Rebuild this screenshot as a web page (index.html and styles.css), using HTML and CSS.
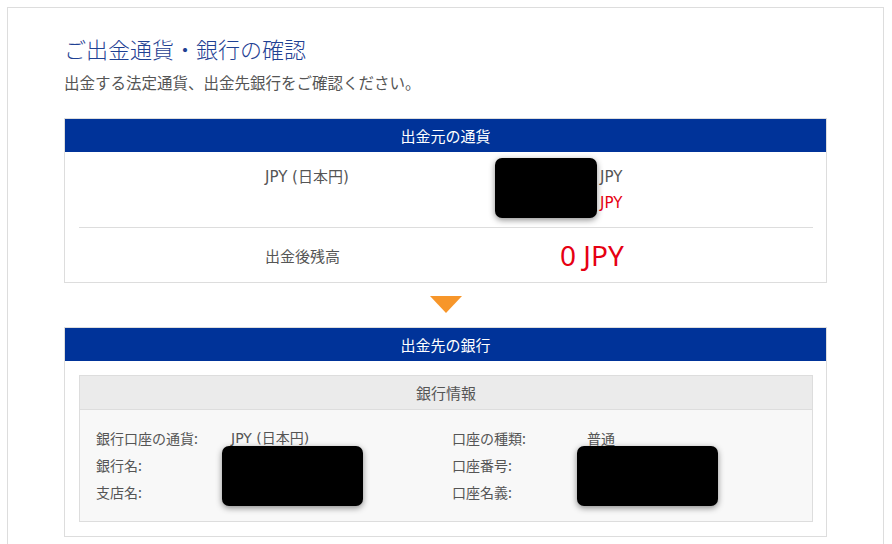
FILE: index.html
```html
<!DOCTYPE html>
<html lang="ja">
<head>
<meta charset="utf-8">
<title>ご出金通貨・銀行の確認</title>
<link rel="stylesheet" href="styles.css">
</head>
<body>
<div class="page">
  <h1 class="title">ご出金通貨・銀行の確認</h1>
  <p class="lead">出金する法定通貨、出金先銀行をご確認ください。</p>

  <section class="box">
    <div class="box-head">出金元の通貨</div>
    <div class="box-rows">
      <div class="row row-currency">
        <div class="cell-label">JPY (日本円)</div>
        <div class="cell-value">
          <div class="line"><span class="num"></span>JPY</div>
          <div class="line red"><span class="num"></span>JPY</div>
        </div>
        <div class="redact redact-amount"></div>
      </div>
      <div class="row row-balance">
        <div class="cell-label">出金後残高</div>
        <div class="cell-value big red">0 JPY</div>
      </div>
    </div>
  </section>

  <div class="arrow-wrap"><div class="arrow"></div></div>

  <section class="box">
    <div class="box-head">出金先の銀行</div>
    <div class="box-body">
      <div class="info">
        <div class="info-head">銀行情報</div>
        <div class="info-body">
          <div class="info-grid">
            <div class="k">銀行口座の通貨:</div><div class="v latin">JPY (日本円)</div>
            <div class="k">口座の種類:</div><div class="v">普通</div>
            <div class="k">銀行名:</div><div class="v"></div>
            <div class="k">口座番号:</div><div class="v"></div>
            <div class="k">支店名:</div><div class="v"></div>
            <div class="k">口座名義:</div><div class="v"></div>
          </div>
          <div class="redact redact-bank"></div>
          <div class="redact redact-account"></div>
        </div>
      </div>
    </div>
  </section>
</div>
</body>
</html>
```

FILE: styles.css
```css
* { box-sizing: border-box; }

html, body {
  margin: 0;
  padding: 0;
  background: #fff;
}

body {
  font-family: "DejaVu Sans", "Noto Sans CJK JP", sans-serif;
  font-size: 15px;
  color: #555;
  overflow: hidden;
}

.page {
  margin: 7px 8px 0 7px;
  border: 1px solid #ddd;
  border-bottom: none;
  padding: 24px 56px 0 56px;
  min-height: 600px;
}

.title {
  margin: 0;
  font-family: "Noto Sans CJK JP", sans-serif;
  font-size: 22px;
  font-weight: 300;
  line-height: 32px;
  color: #1f4193;
}

.lead {
  margin: 6px 0 0 0;
  font-family: "Noto Sans CJK JP", sans-serif;
  font-size: 15.5px;
  line-height: 24px;
  color: #555;
}

.box {
  border: 1px solid #ddd;
  margin-top: 24px;
}

.box-head {
  height: 33px;
  line-height: 33px;
  background: #003399;
  color: #fff;
  text-align: center;
  font-family: "Noto Sans CJK JP", sans-serif;
  font-size: 15px;
}

.box-rows {
  padding: 0 13px 0 14px;
}

.row {
  position: relative;
  display: grid;
  grid-template-columns: 481px 1fr;
}

.row-currency {
  padding: 12px 0 11px;
  line-height: 26px;
  border-bottom: 1px solid #ddd;
}

.row-balance {
  height: 54px;
  align-items: center;
}

.cell-label {
  padding-left: 186px;
}

.line .num {
  display: inline-block;
  width: 40px;
}

.red { color: #e60012; }

.big {
  font-family: "Noto Sans", "DejaVu Sans", sans-serif;
  font-size: 28px;
  line-height: 34px;
}

.redact {
  position: absolute;
  background: #000;
  border-radius: 7px;
  box-shadow: 0 2px 6px rgba(0, 0, 0, 0.45);
}

.redact-amount {
  left: 416px;
  top: 6px;
  width: 102px;
  height: 60px;
}

.arrow-wrap {
  display: flex;
  justify-content: center;
  padding: 13px 0 14px 0;
}

.arrow {
  width: 0;
  height: 0;
  border-left: 16px solid transparent;
  border-right: 16px solid transparent;
  border-top: 17px solid #f7962a;
}

.arrow-wrap + .box {
  margin-top: 0;
}

.box-body {
  padding: 14px 13px 14px 14px;
}

.info {
  border: 1px solid #ddd;
}

.info-head {
  height: 34px;
  line-height: 33px;
  background: #ebebeb;
  border-bottom: 1px solid #ddd;
  text-align: center;
  font-family: "Noto Sans CJK JP", sans-serif;
  font-size: 15px;
  color: #555;
}

.info-body {
  position: relative;
  background: #f8f8f8;
  padding: 15px 16px 15px 16px;
}

.info-grid {
  display: grid;
  grid-template-columns: 135px 221px 135px 1fr;
  font-size: 14px;
  line-height: 27px;
}

.info-grid .k,
.info-grid .v {
  min-height: 27px;
  font-family: "Noto Sans CJK JP", sans-serif;
}

.info-grid .v.latin {
  font-family: "DejaVu Sans", "Noto Sans CJK JP", sans-serif;
}

.redact-bank {
  left: 142px;
  top: 36px;
  width: 141px;
  height: 60px;
}

.redact-account {
  left: 497px;
  top: 36px;
  width: 141px;
  height: 60px;
}
```
